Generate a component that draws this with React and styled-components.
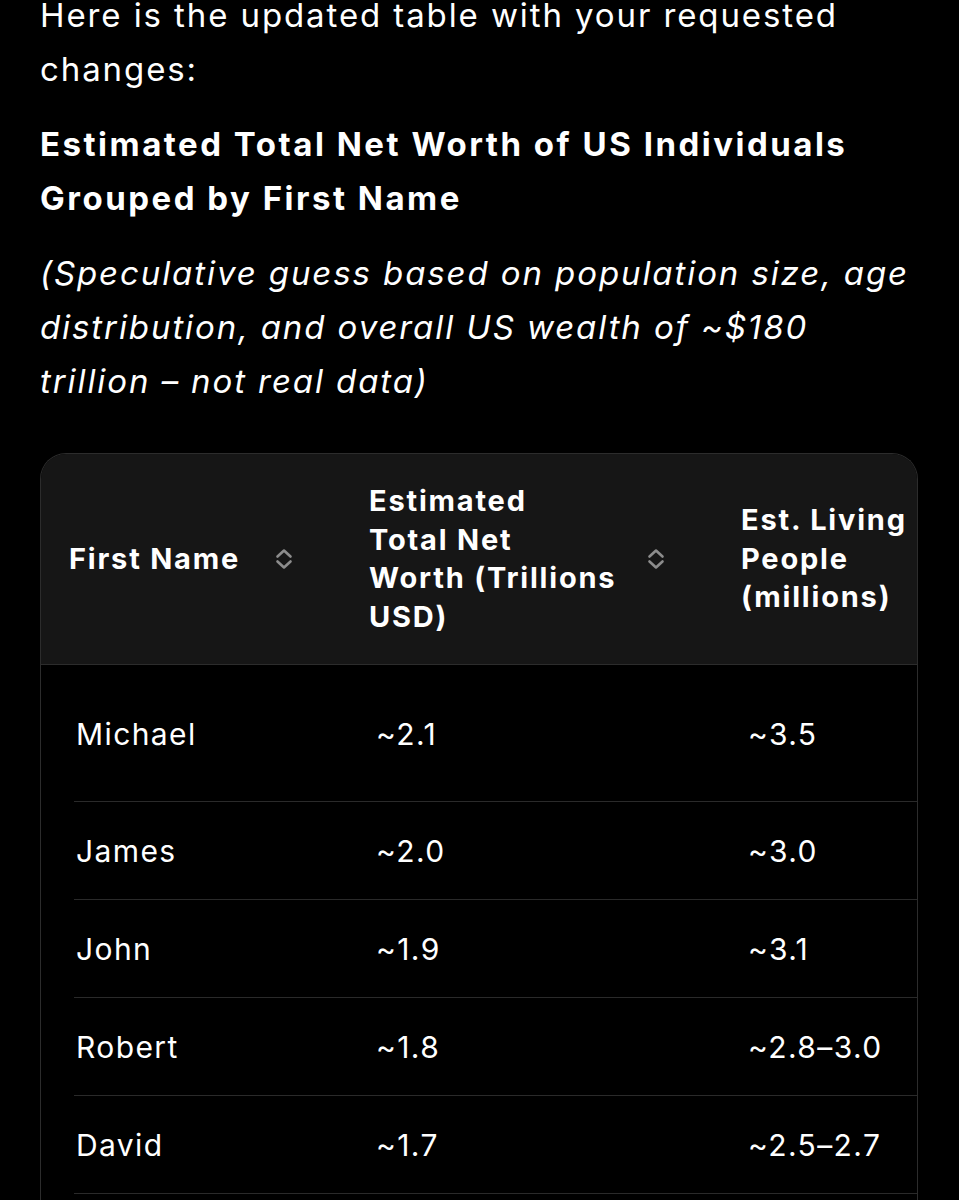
import styled, { createGlobalStyle } from "styled-components";

const GlobalStyle = createGlobalStyle`
  html, body {
    margin: 0;
    padding: 0;
    background: #000;
  }
  body {
    color: #fff;
    font-family: Inter, "Noto Sans", "Liberation Sans", sans-serif;
    -webkit-font-smoothing: antialiased;
  }
`;

const Page = styled.main`
  padding: 0 41px 0 40px;
  overflow: hidden;
  height: 1200px;
`;

const Paragraph = styled.p`
  margin: 0 0 21px;
  font-size: 33px;
  line-height: 54px;
  letter-spacing: ${(p) => (p.$bold ? 2.5 : 1.9)}px;
  font-weight: ${(p) => (p.$bold ? 700 : 400)};
  font-style: ${(p) => (p.$italic ? "italic" : "normal")};
  &:first-child {
    margin-top: -12px;
  }
`;

const TableWrap = styled.div`
  margin-top: 45px;
  border: 1.5px solid #2c2c2c;
  border-bottom: none;
  border-radius: 26px 26px 0 0;
  overflow: hidden;
  background: #000;
`;

const Row = styled.div`
  display: grid;
  grid-template-columns: 300px 372px 300px;
`;

const HeaderRow = styled(Row)`
  background: #161616;
  border-bottom: 1.5px solid #2c2c2c;
  min-height: 210px;
`;

const HeadCell = styled.div`
  display: flex;
  align-items: center;
  justify-content: space-between;
  gap: 16px;
  padding: 0 48px 0 28px;
  font-size: 29px;
  line-height: 38.5px;
  letter-spacing: 1.8px;
  font-weight: 700;
`;

const BodyRow = styled(Row)`
  min-height: ${(p) => (p.$first ? 137 : 98)}px;
  background: linear-gradient(#2a2a2a, #2a2a2a) no-repeat 33px 100% /
    calc(100% - 33px) 1.5px;
`;

const Cell = styled.div`
  display: flex;
  align-items: center;
  padding-left: 35px;
  font-size: 30px;
  letter-spacing: 1.4px;
  font-weight: 400;
`;

const TableBody = styled.div`
  padding-bottom: 24px;
`;

const SortIcon = () => (
  <svg width="18" height="24" viewBox="0 0 18 24" fill="none" aria-hidden="true">
    <polyline
      points="2.5,9.5 9,3.5 15.5,9.5"
      stroke="#8c8c8c"
      strokeWidth="2.6"
      strokeLinecap="round"
      strokeLinejoin="round"
    />
    <polyline
      points="2.5,14.5 9,20.5 15.5,14.5"
      stroke="#8c8c8c"
      strokeWidth="2.6"
      strokeLinecap="round"
      strokeLinejoin="round"
    />
  </svg>
);

const columns = [
  ["First Name"],
  ["Estimated", "Total Net", "Worth (Trillions", "USD)"],
  ["Est. Living People (millions)"],
];

const rows = [
  ["Michael", "~2.1", "~3.5"],
  ["James", "~2.0", "~3.0"],
  ["John", "~1.9", "~3.1"],
  ["Robert", "~1.8", "~2.8–3.0"],
  ["David", "~1.7", "~2.5–2.7"],
];

export default function App() {
  return (
    <>
      <GlobalStyle />
      <Page>
        <Paragraph>Here is the updated table with your requested changes:</Paragraph>
        <Paragraph $bold>Estimated Total Net Worth of US Individuals Grouped by First Name</Paragraph>
        <Paragraph $italic>
          (Speculative guess based on population size, age distribution, and overall US wealth of ~$180
          trillion – not real data)
        </Paragraph>

        <TableWrap>
          <HeaderRow>
            {columns.map((lines, i) => (
              <HeadCell key={i}>
                <span>
                  {lines.map((l, j) => (
                    <span key={j}>
                      {j > 0 && <br />}
                      {l}
                    </span>
                  ))}
                </span>
                <SortIcon />
              </HeadCell>
            ))}
          </HeaderRow>
          <TableBody>
            {rows.map((r, i) => (
              <BodyRow key={r[0]} $first={i === 0}>
                {r.map((v, j) => (
                  <Cell key={j}>{v}</Cell>
                ))}
              </BodyRow>
            ))}
          </TableBody>
        </TableWrap>
      </Page>
    </>
  );
}
